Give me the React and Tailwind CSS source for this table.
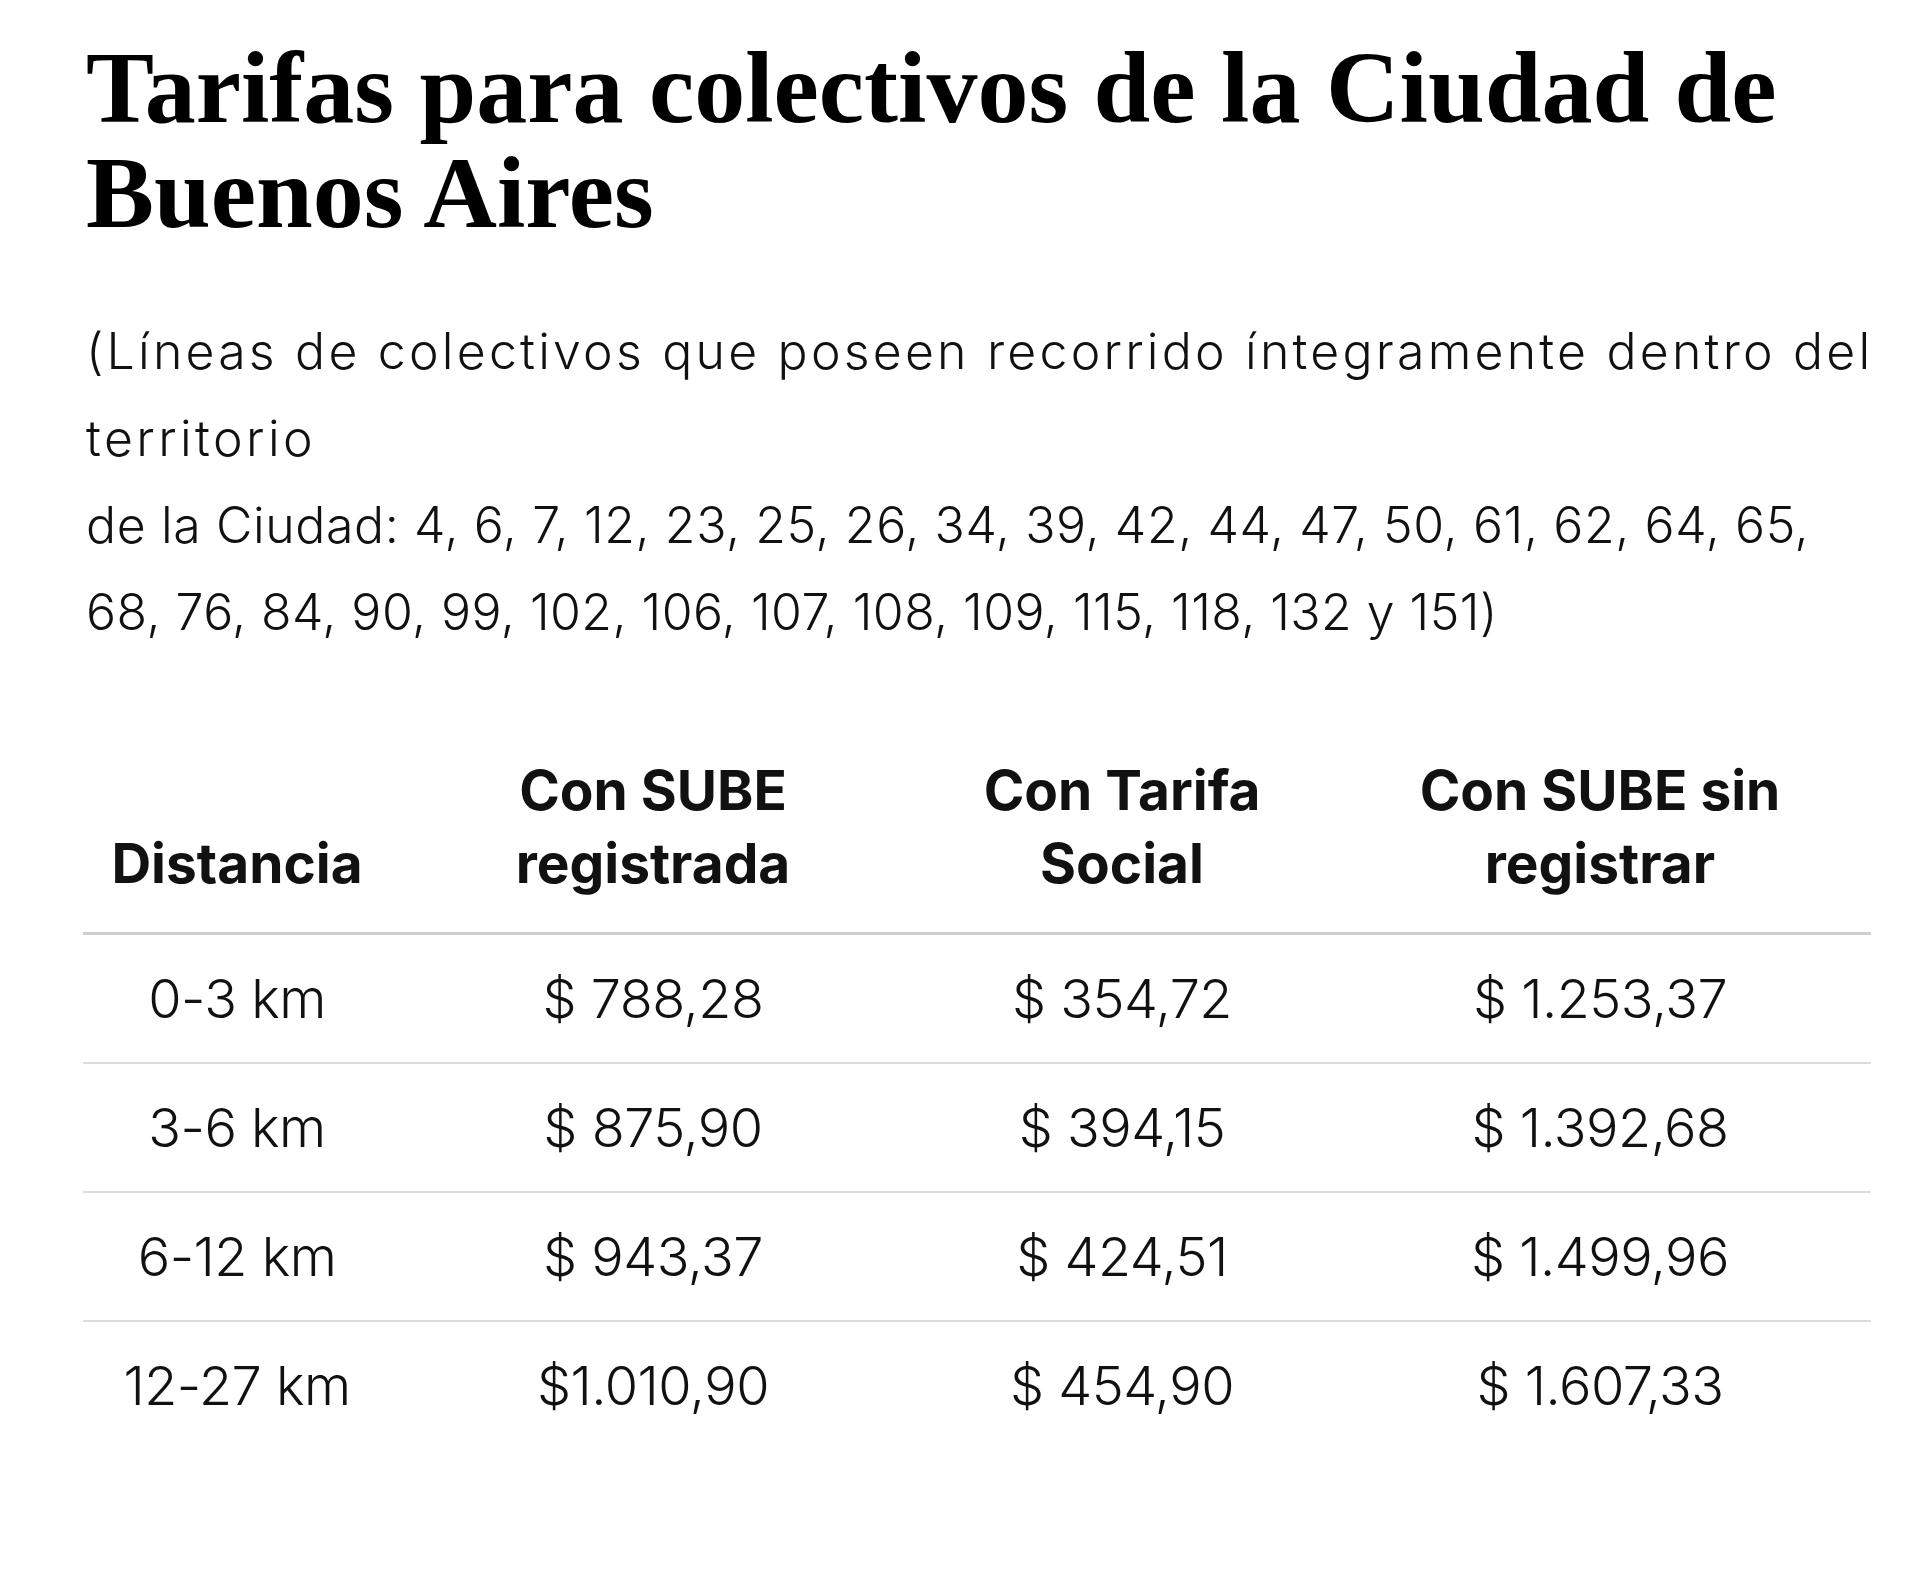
// Tarifas de colectivos CABA

const rows = [
  { dist: '0-3 km', reg: '$ 788,28', social: '$ 354,72', sinReg: '$ 1.253,37' },
  { dist: '3-6 km', reg: '$ 875,90', social: '$ 394,15', sinReg: '$ 1.392,68' },
  { dist: '6-12 km', reg: '$ 943,37', social: '$ 424,51', sinReg: '$ 1.499,96' },
  { dist: '12-27 km', reg: '$1.010,90', social: '$ 454,90', sinReg: '$ 1.607,33' },
];

const sans = "font-['Inter','Open_Sans',sans-serif]";

export default function App() {
  return (
    <div className="min-h-[1570px] w-[1920px] bg-white text-[#111]">
      <div className="ml-[86px] w-[1788px] pt-[35px]">
        <h1 className="font-['Liberation_Serif','Times_New_Roman',serif] text-[102px] font-bold leading-[105px] text-black">
          Tarifas para colectivos de la Ciudad de Buenos Aires
        </h1>

        <p className={`${sans} mt-[63px] text-[50px] font-light leading-[87px]`}>
          <span className="whitespace-nowrap tracking-[3.2px]">(Líneas de colectivos que poseen recorrido íntegramente dentro del</span>
          <br />
          <span className="tracking-[3.4px]">territorio</span>
          <br />
          <span className="whitespace-nowrap tracking-[0.6px]">de la Ciudad: 4, 6, 7, 12, 23, 25, 26, 34, 39, 42, 44, 47, 50, 61, 62, 64, 65,</span>
          <br />
          <span className="whitespace-nowrap tracking-[0.45px]">68, 76, 84, 90, 99, 102, 106, 107, 108, 109, 115, 118, 132 y 151)</span>
        </p>

        <table className={`${sans} -ml-[3px] mt-[66px] w-[1788px] table-fixed border-collapse text-center`}>
          <colgroup>
            <col className="w-[308px]" />
            <col className="w-[524px]" />
            <col className="w-[414px]" />
            <col className="w-[542px]" />
          </colgroup>
          <thead>
            <tr className="border-b-[3px] border-[#cfcfcf]">
              <th className="px-3 pb-[32px] pt-[32px] align-bottom text-[55px] font-bold leading-[73px]">Distancia</th>
              <th className="px-3 pb-[32px] pt-[32px] align-bottom text-[55px] font-bold leading-[73px]">
                Con SUBE
                <br />
                registrada
              </th>
              <th className="px-3 pb-[32px] pt-[32px] align-bottom text-[55px] font-bold leading-[73px]">
                Con Tarifa
                <br />
                Social
              </th>
              <th className="px-3 pb-[32px] pt-[32px] align-bottom text-[55px] font-bold leading-[73px]">
                Con SUBE sin
                <br />
                registrar
              </th>
            </tr>
          </thead>
          <tbody>
            {rows.map((r, i) => (
              <tr key={r.dist} className={i < rows.length - 1 ? 'border-b-2 border-[#dcdcdc]' : ''}>
                <td className="px-3 py-[27px] text-[54px] font-light leading-[73px] tracking-[-0.5px]">{r.dist}</td>
                <td className="px-3 py-[27px] text-[54px] font-light leading-[73px] tracking-[-0.5px]">{r.reg}</td>
                <td className="px-3 py-[27px] text-[54px] font-light leading-[73px] tracking-[-0.5px]">{r.social}</td>
                <td className="px-3 py-[27px] text-[54px] font-light leading-[73px] tracking-[-0.5px]">{r.sinReg}</td>
              </tr>
            ))}
          </tbody>
        </table>
      </div>
    </div>
  );
}
